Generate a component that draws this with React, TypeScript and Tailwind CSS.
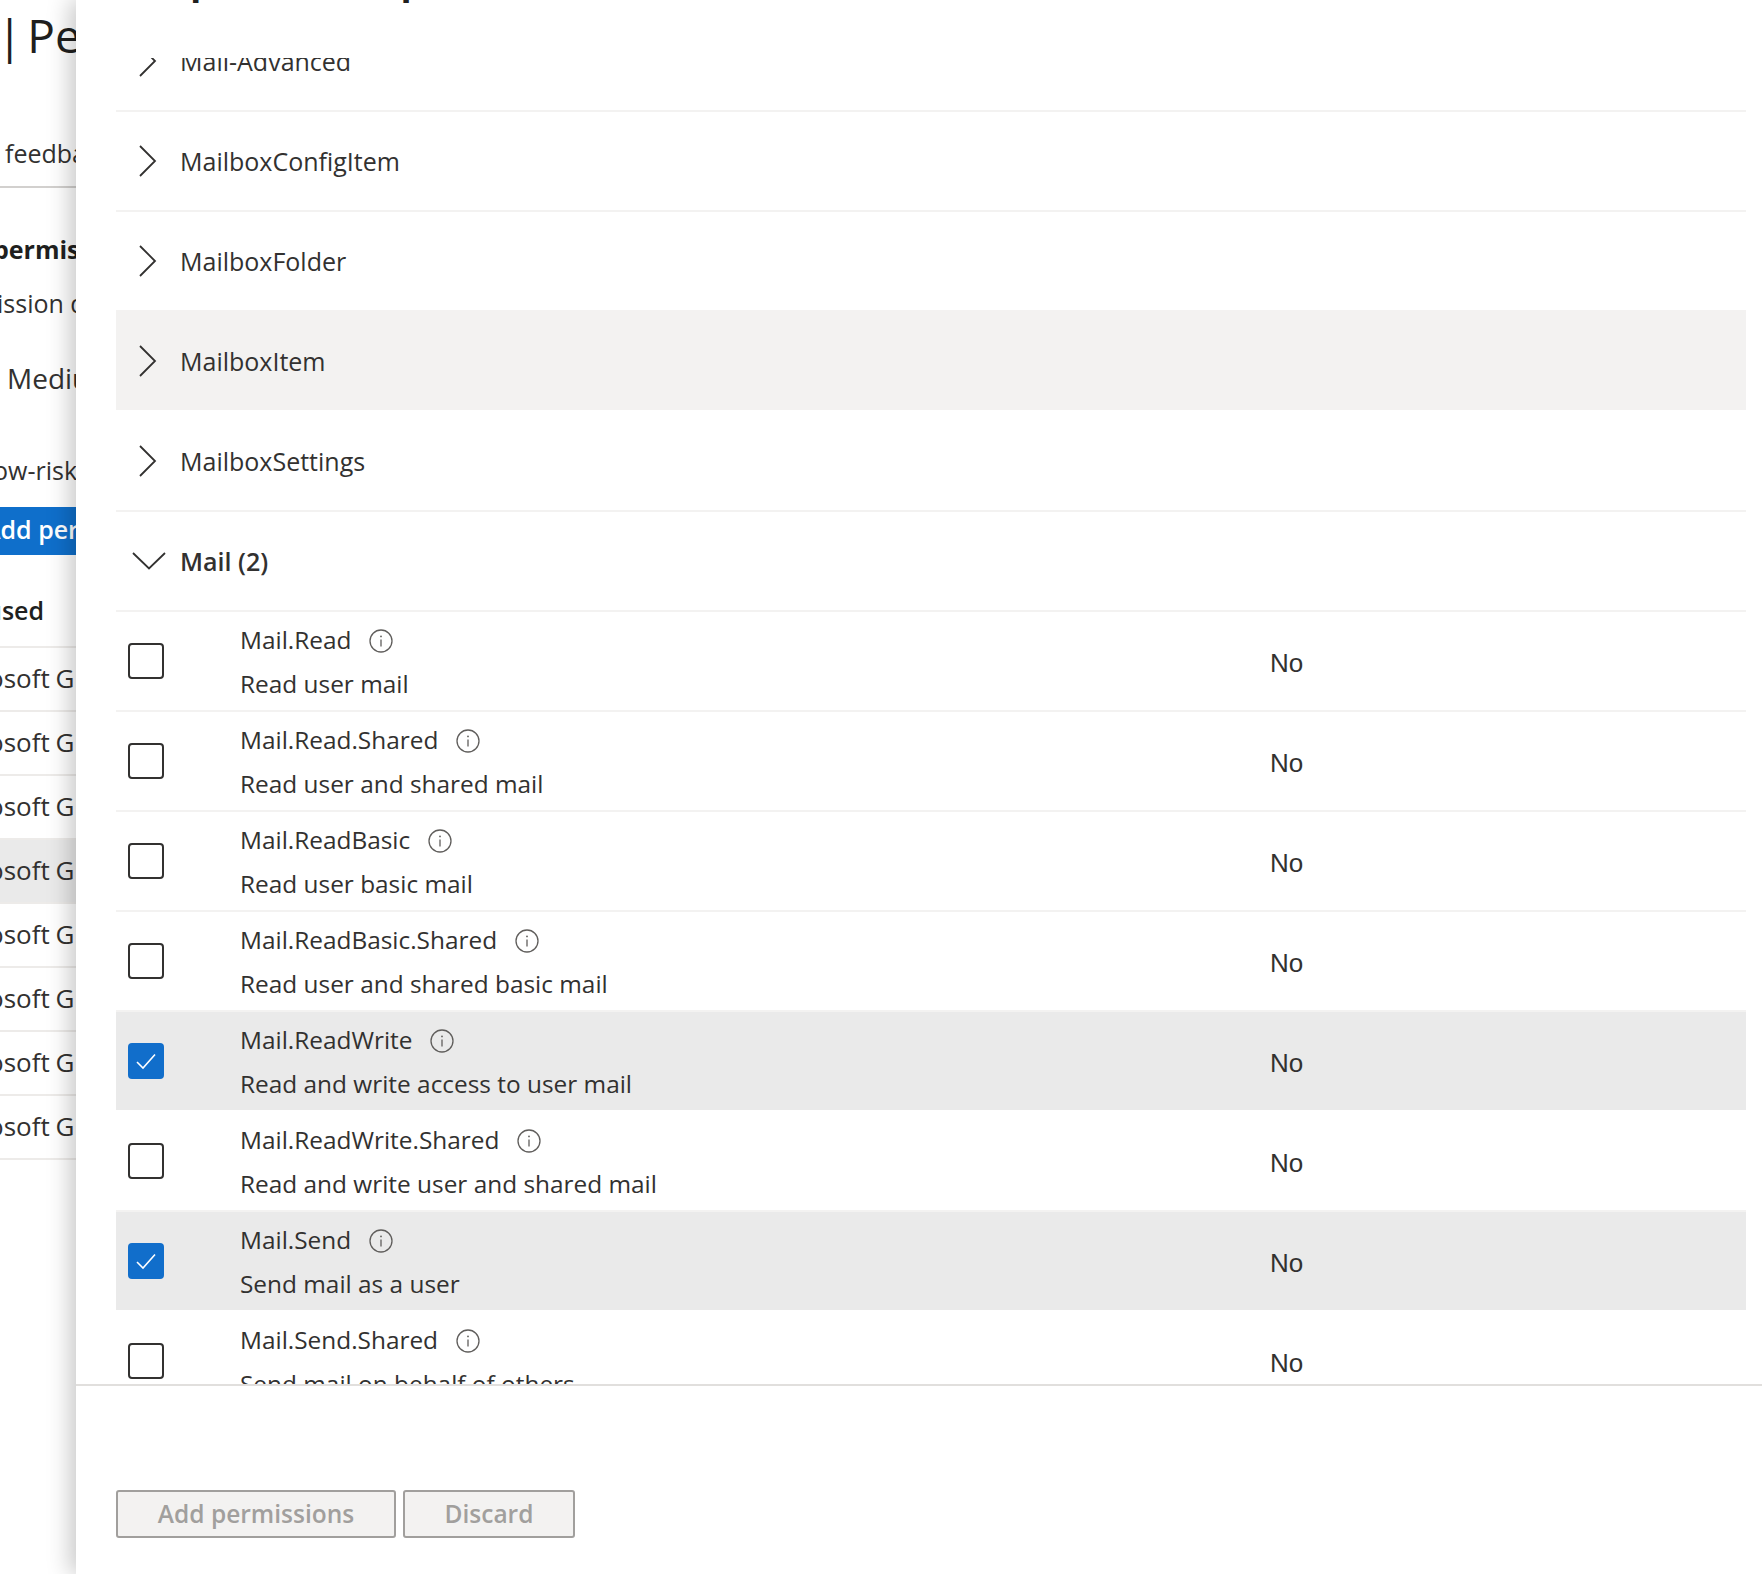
import React from "react";

const FONT = "font-['Open_Sans','Noto_Sans',sans-serif]";

function ChevronR() {
  return (
    <svg width="34" height="34" viewBox="0 0 34 34" fill="none" className="shrink-0 -mt-[1px]">
      <path d="M4 2 L19 17 L4 32" stroke="#323130" strokeWidth="1.8" />
    </svg>
  );
}

function ChevronD() {
  return (
    <svg width="34" height="18" viewBox="0 0 34 18" fill="none" className="shrink-0">
      <path d="M1 1 L17 16.5 L33 1" stroke="#323130" strokeWidth="1.8" />
    </svg>
  );
}

function Info() {
  return (
    <svg width="24" height="24" viewBox="0 0 24 24" fill="none" className="shrink-0">
      <circle cx="12" cy="12" r="11" stroke="#605e5c" strokeWidth="1.3" />
      <path d="M12 10.5 V17.5" stroke="#605e5c" strokeWidth="1.3" />
      <circle cx="12" cy="7.4" r="0.9" fill="#605e5c" />
    </svg>
  );
}

function Group({ name, hover }: { name: string; hover?: boolean }) {
  return (
    <div className={`h-[100px] flex items-center pl-[20px] border-b-2 ${hover ? "bg-[#f3f2f1] border-white" : "border-[#f3f2f1]"}`}>
      <div className="w-[44px] shrink-0">
        <ChevronR />
      </div>
      <span className="text-[25px] text-[#323130] leading-none">{name}</span>
    </div>
  );
}

function Row({ name, desc, checked }: { name: string; desc: string; checked?: boolean }) {
  return (
    <div className={`h-[100px] flex items-center border-b-2 ${checked ? "bg-[#eaeaea] border-white" : "border-[#f3f2f1]"}`}>
      <div className="w-[124px] shrink-0 pl-[12px] -mt-[1px]">
        {checked ? (
          <div className="w-[36px] h-[36px] rounded-[4px] bg-[#116ecb] flex items-center justify-center">
            <svg width="24" height="24" viewBox="0 0 24 24" fill="none">
              <path d="M3 13 L9 19 L21 5.5" stroke="#ffffff" strokeWidth="1.6" />
            </svg>
          </div>
        ) : (
          <div className="w-[36px] h-[36px] rounded-[4px] border-2 border-[#323130] bg-white" />
        )}
      </div>
      <div className="w-[1030px] shrink-0 flex flex-col gap-[9px] mt-[2px]">
        <div className="flex items-center gap-[18px] h-[34px]">
          <span className="text-[24.4px] text-[#323130] leading-none whitespace-nowrap">{name}</span>
          <Info />
        </div>
        <span className="text-[24.4px] text-[#323130] leading-[34px] whitespace-nowrap">{desc}</span>
      </div>
      <span className="text-[26px] text-[#323130] font-['Liberation_Sans',sans-serif] mt-[4px]">No</span>
    </div>
  );
}

const LEFT_ROWS = [0, 1, 2, 3, 4, 5, 6, 7];

export default function App() {
  return (
    <div className={`flex w-[1762px] h-[1574px] bg-white overflow-hidden ${FONT}`}>
      <div className="w-[76px] shrink-0 overflow-hidden text-[#323130] whitespace-nowrap">
        <div className="h-[70px] flex items-center -ml-[3px] text-[46px] text-[#201f1e] leading-none [word-spacing:-7px]">| Permissions</div>
        <div className="mt-[66px] h-[52px] border-b-2 border-[#d2d0ce] pl-[5px] text-[25px] leading-[34px]">feedback</div>
        <div className="mt-[44px] h-[34px] -ml-[7px] text-[25px] leading-[34px] font-bold text-[#201f1e]">permissions</div>
        <div className="mt-[20px] h-[34px] -ml-[3px] text-[25px] leading-[34px]">ission d</div>
        <div className="mt-[41px] h-[34px] pl-[7px] text-[28px] leading-[34px]">Medium</div>
        <div className="mt-[58px] h-[34px] -ml-[7px] text-[25px] leading-[34px]">ow-risk</div>
        <div className="mt-[20px] h-[48px] bg-[#0f6fcb] text-white text-[25px] font-semibold leading-[44px] -ml-[16px]">Add permissions</div>
        <div className="mt-[38px] h-[34px] -ml-[14px] text-[25px] leading-[34px] font-semibold text-[#201f1e]">used</div>
        <div className="mt-[19px] border-t-2 border-[#edebe9]">
          {LEFT_ROWS.map((i) => (
            <div key={i} className={`h-[64px] border-b-2 border-[#edebe9] text-[26px] leading-[60px] ${i === 3 ? "bg-[#eaeaea]" : ""}`}>
              <span className="-ml-[12px] inline-block [word-spacing:-1px]">osoft G</span>
            </div>
          ))}
        </div>
      </div>

      <div className="relative flex-1 flex flex-col shadow-[-6px_0_22px_rgba(0,0,0,0.22)] bg-white">
        <div className="h-[58px] overflow-hidden pl-[40px]">
          <div className="-mt-[54px] text-[47px] leading-[56px] font-semibold text-[#201f1e] whitespace-nowrap">Request API permissions</div>
        </div>
        <div className="h-[1326px] overflow-hidden pl-[40px] pr-[16px]">
          <div className="-mt-[46px]">
            <Group name="Mail-Advanced" />
            <Group name="MailboxConfigItem" />
            <Group name="MailboxFolder" />
            <Group name="MailboxItem" hover />
            <Group name="MailboxSettings" />
            <div className="h-[100px] flex items-center pl-[16px] border-b-2 border-[#f3f2f1]">
              <div className="w-[48px] shrink-0">
                <ChevronD />
              </div>
              <span className="text-[25px] font-semibold text-[#323130] leading-none">Mail (2)</span>
            </div>
            <Row name="Mail.Read" desc="Read user mail" />
            <Row name="Mail.Read.Shared" desc="Read user and shared mail" />
            <Row name="Mail.ReadBasic" desc="Read user basic mail" />
            <Row name="Mail.ReadBasic.Shared" desc="Read user and shared basic mail" />
            <Row name="Mail.ReadWrite" desc="Read and write access to user mail" checked />
            <Row name="Mail.ReadWrite.Shared" desc="Read and write user and shared mail" />
            <Row name="Mail.Send" desc="Send mail as a user" checked />
            <Row name="Mail.Send.Shared" desc="Send mail on behalf of others" />
          </div>
        </div>
        <div className="flex-1 border-t-2 border-[#e1dfdd] pl-[40px] pt-[104px] flex gap-[7px] items-start">
          <button className="w-[280px] h-[48px] rounded-[3px] border-2 border-[#a19f9d] bg-[#f3f2f1] text-[#a19f9d] text-[24.5px] font-semibold leading-none">Add permissions</button>
          <button className="w-[172px] h-[48px] rounded-[3px] border-2 border-[#a19f9d] bg-[#f3f2f1] text-[#a19f9d] text-[24.5px] font-semibold leading-none">Discard</button>
        </div>
      </div>
    </div>
  );
}
